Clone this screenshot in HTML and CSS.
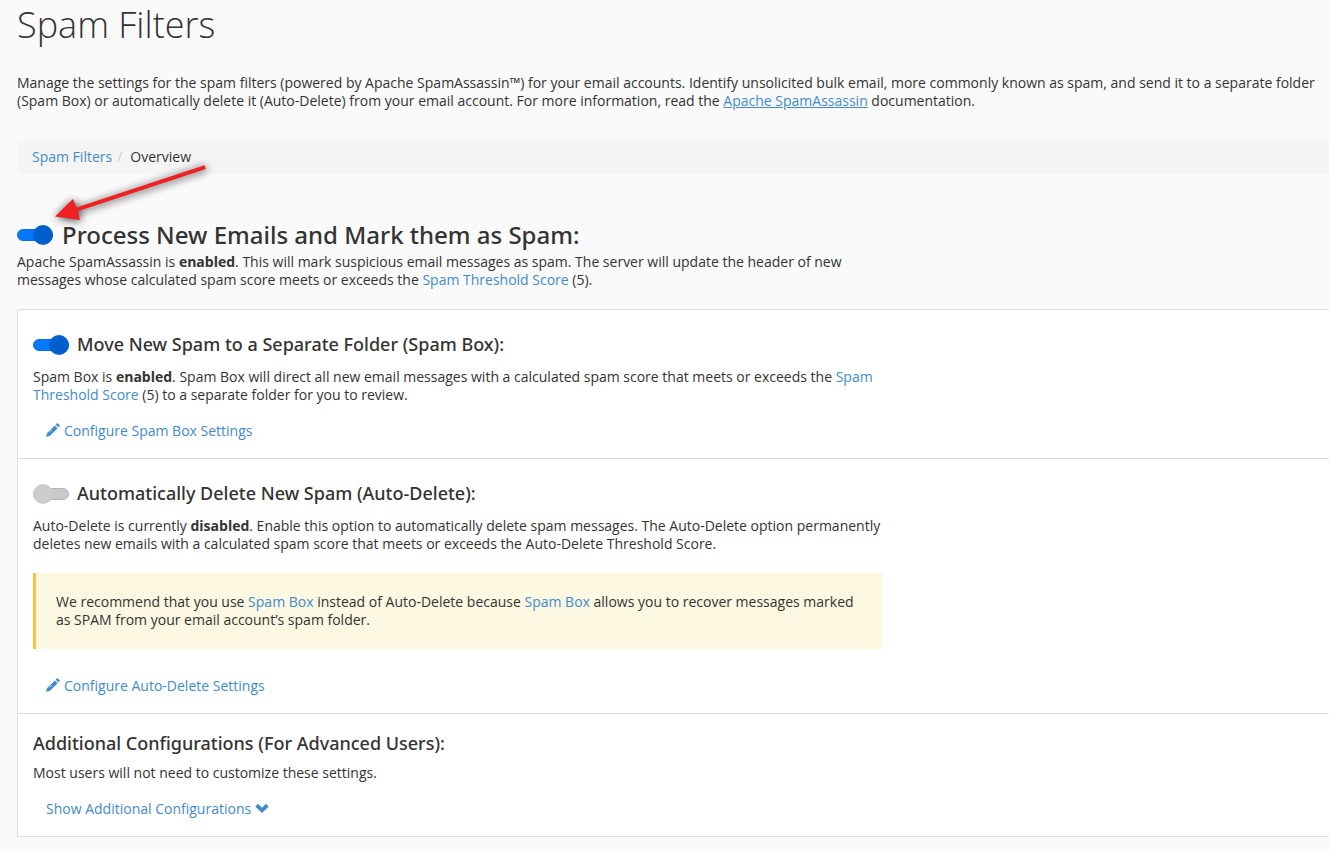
FILE: index.html
```html
<!DOCTYPE html>
<html lang="en">
<head>
  <meta charset="UTF-8">
  <title>Spam Filters</title>
  <link rel="stylesheet" href="styles.css">
</head>
<body>
  <h1 class="page-title">Spam Filters</h1>
  <p class="page-desc">Manage the settings for the spam filters (powered by Apache SpamAssassin™) for your email accounts. Identify unsolicited bulk email, more commonly known as spam, and send it to a separate folder (Spam Box) or automatically delete it (Auto-Delete) from your email account. For more information, read the <a href="#" class="doc-link">Apache SpamAssassin</a> documentation.</p>

  <nav class="breadcrumb">
    <a href="#">Spam Filters</a>
    <span class="divider">/</span>
    <span>Overview</span>
    <!-- Arrow pointing at the main switch -->
    <svg class="arrow" width="180" height="86" viewBox="0 0 180 86" aria-hidden="true">
      <path fill="#f02020" d="M173.600 25.200L174.800 29L46.700 71.300L49 80L24 76.500L42 59L45.500 67.500Z"/>
    </svg>
  </nav>

  <!-- Main switch -->
  <div class="heading-row main-row">
    <input type="checkbox" class="toggle" id="processSpam" checked>
    <h2 class="main-title"><label for="processSpam">Process New Emails and Mark them as Spam:</label></h2>
  </div>
  <p class="text">Apache SpamAssassin is <strong>enabled</strong>. This will mark suspicious email messages as spam. The server will update the header of new messages whose calculated spam score meets or exceeds the <a href="#">Spam Threshold Score</a> (5).</p>

  <div class="panel">
    <!-- Spam Box -->
    <section class="panel-item">
      <div class="heading-row">
        <input type="checkbox" class="toggle" id="spamBox" checked>
        <h3 class="item-title"><label for="spamBox">Move New Spam to a Separate Folder (Spam Box):</label></h3>
      </div>
      <p class="text">Spam Box is <strong>enabled</strong>. Spam Box will direct all new email messages with a calculated spam score that meets or exceeds the <a href="#">Spam Threshold Score</a> (5) to a separate folder for you to review.</p>
      <a href="#" class="btn-link">
        <svg class="icon" width="14" height="14" viewBox="0 0 14 14"><path d="M0 14L1.200 10L8.800 2.400L11.600 5.200L4 12.800ZM9.600 1.600L10.700 .5Q11.300 0 11.900 .5L13.500 2.100Q14 2.700 13.500 3.300L12.400 4.400Z"/><path class="shine" d="M3.500 9.500L6 7"/></svg>
        Configure Spam Box Settings
      </a>
    </section>

    <!-- Auto-Delete -->
    <section class="panel-item">
      <div class="heading-row">
        <input type="checkbox" class="toggle" id="autoDelete">
        <h3 class="item-title"><label for="autoDelete">Automatically Delete New Spam (Auto-Delete):</label></h3>
      </div>
      <p class="text">Auto-Delete is currently <strong>disabled</strong>. Enable this option to automatically delete spam messages. The Auto-Delete option permanently deletes new emails with a calculated spam score that meets or exceeds the Auto-Delete Threshold Score.</p>
      <div class="callout">We recommend that you use <a href="#">Spam Box</a> instead of Auto-Delete because <a href="#">Spam Box</a> allows you to recover messages marked as SPAM from your email account’s spam folder.</div>
      <a href="#" class="btn-link">
        <svg class="icon" width="14" height="14" viewBox="0 0 14 14"><path d="M0 14L1.200 10L8.800 2.400L11.600 5.200L4 12.800ZM9.600 1.600L10.700 .5Q11.300 0 11.900 .5L13.500 2.100Q14 2.700 13.500 3.300L12.400 4.400Z"/><path class="shine" d="M3.500 9.500L6 7"/></svg>
        Configure Auto-Delete Settings
      </a>
    </section>

    <!-- Advanced -->
    <section class="panel-item advanced">
      <h3 class="item-title">Additional Configurations (For Advanced Users):</h3>
      <p class="text">Most users will not need to customize these settings.</p>
      <button type="button" class="btn-link">
        Show Additional Configurations
        <svg class="icon" width="14" height="14" viewBox="0 0 14 14"><path d="M.3 5.500L3 2.800L7 6.700L11 2.800L13.700 5.500L7 12Z"/></svg>
      </button>
    </section>
  </div>
</body>
</html>
```
FILE: styles.css
```css
body {
  margin: 0;
  padding: 0 0 14px 17px;
  background-color: #fafafa;
  color: #333;
  font-family: "Open Sans", sans-serif;
  font-size: 14px;
  line-height: 18px;
}
h1, h2, h3, p {
  margin: 0;
}
a {
  color: #428bca;
  text-decoration: none;
}
a:hover {
  text-decoration: underline;
}
.page-title {
  font-size: 36px;
  font-weight: 300;
  line-height: 50px;
}
.page-desc {
  margin: 24px 0 30px;
  padding-right: 12px;
}
.doc-link {
  text-decoration: underline;
}
.breadcrumb {
  position: relative;
  display: flex;
  gap: 5px;
  padding: 8px 15px;
  background-color: #f5f5f5;
  border-radius: 4px 0 0 4px;
}
.divider {
  padding-right: 3px;
  color: #ccc;
}
.arrow {
  position: absolute;
  left: 14px;
  top: 0;
  overflow: visible;
  pointer-events: none;
  filter: drop-shadow(1px 1px 4px rgba(0,0,0,0.8));
}
.heading-row {
  display: flex;
  align-items: flex-end;
  gap: 8px;
}
.main-row {
  align-items: center;
  gap: 9px;
  margin: 48px 0 5px;
}
.main-title, .item-title {
  font-family: "Noto Sans", "Open Sans", sans-serif;
  font-weight: 500;
}
.main-title {
  font-size: 24px;
  line-height: 26px;
}
.item-title {
  font-size: 18px;
  line-height: 22px;
}
.text {
  max-width: 850px;
}

/* Switches */
.toggle {
  appearance: none;
  display: flex;
  align-items: center;
  position: relative;
  width: 36px;
  height: 20px;
  margin: 0;
  cursor: pointer;
}
.toggle::before {
  content: "";
  width: 36px;
  height: 12px;
  box-sizing: border-box;
  border: 1px solid #b5b5b5;
  border-radius: 6px;
  background-color: #c8c8c8;
}
.toggle::after {
  content: "";
  position: absolute;
  left: 0;
  top: 0;
  width: 20px;
  height: 20px;
  border-radius: 50%;
  background-color: #ccc;
}
.toggle:checked::before {
  border-color: #0a6fe0;
  background-color: #0479ff;
}
.toggle:checked::after {
  left: auto;
  right: 0;
  background-color: #005fcc;
}

.panel {
  margin-top: 20px;
  background-color: #fff;
  border: 1px solid #ddd;
  border-right: none;
  border-radius: 4px 0 0 0;
}
.panel-item {
  padding: 23px 15px 12px;
}
.panel-item + .panel-item {
  border-top: 1px solid #ddd;
}
.panel-item .text {
  margin: 13px 0 12px;
}
.panel-item.advanced {
  padding-top: 18px;
}
.advanced .text {
  margin-top: 10px;
}
.callout {
  box-sizing: border-box;
  max-width: 849px;
  margin: 20px 0 22px;
  padding: 20px;
  background-color: #fcf8e1;
  border-left: 3px solid #f6c342;
}
.btn-link {
  display: flex;
  width: fit-content;
  align-items: center;
  gap: 4px;
  padding: 6px 13px;
  border: none;
  background: none;
  color: #428bca;
  font: inherit;
  cursor: pointer;
}
.icon {
  margin-bottom: 2px;
  fill: currentColor;
}
.shine {
  fill: none;
  stroke: #fff;
  stroke-width: 0.6;
}
```
